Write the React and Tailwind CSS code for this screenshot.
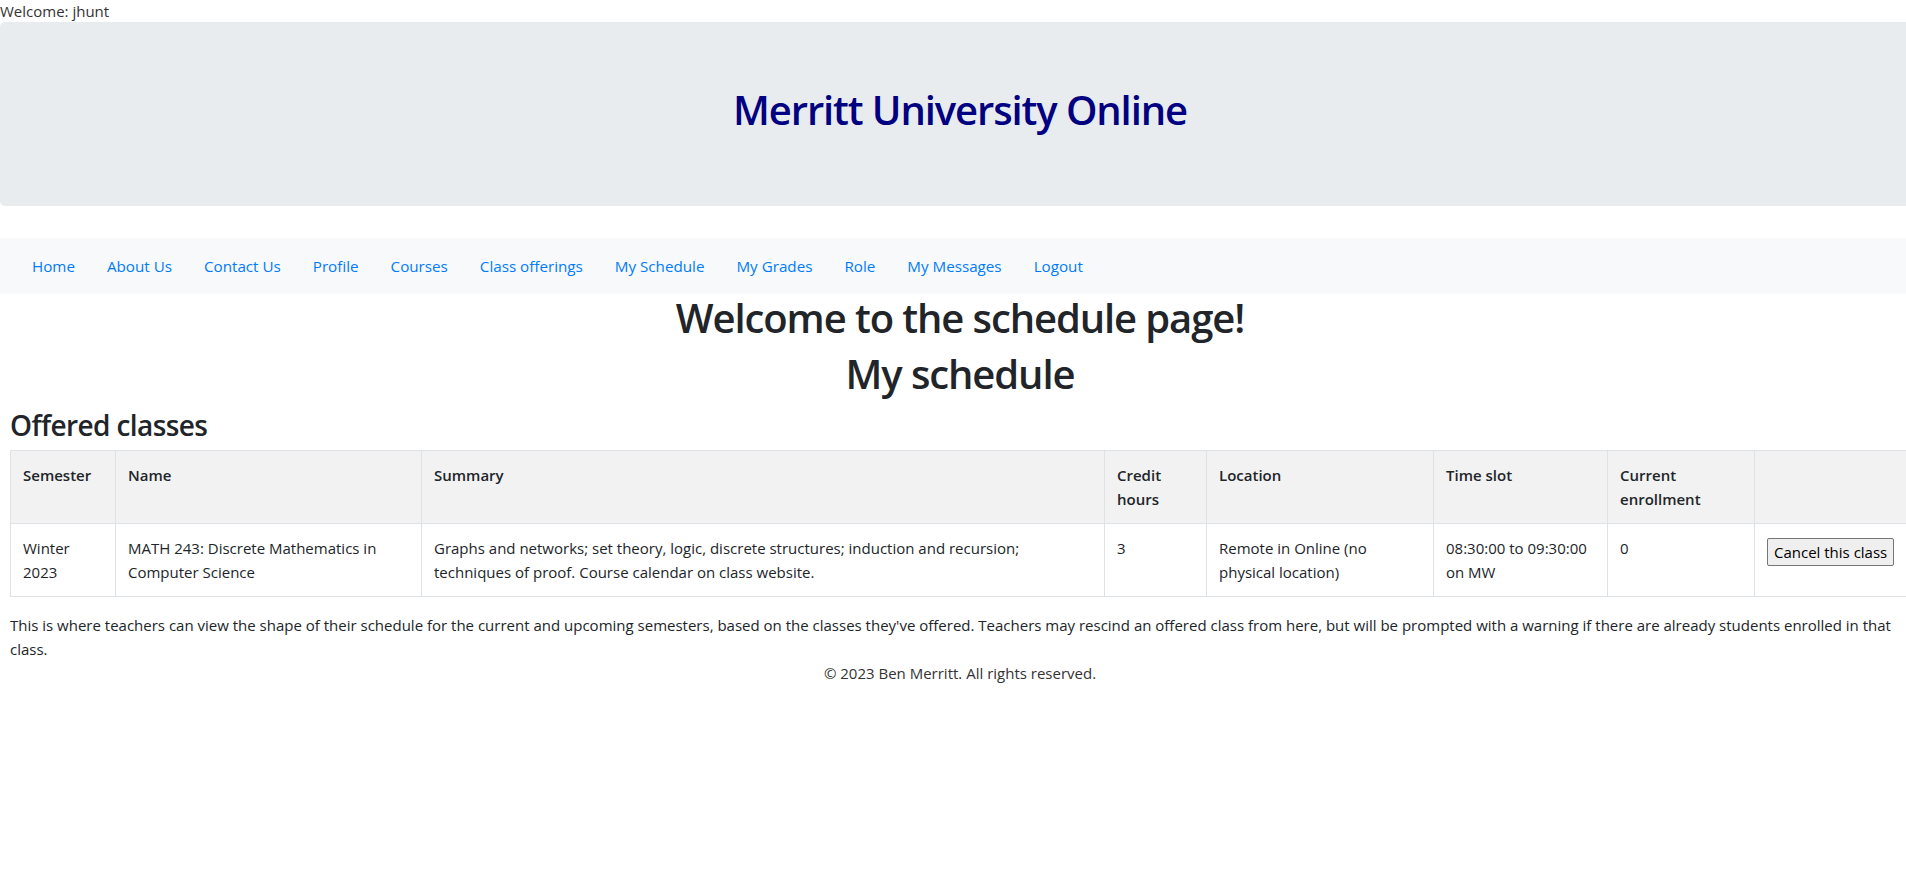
export default function App() {
  const links = ["Home", "About Us", "Contact Us", "Profile", "Courses", "Class offerings", "My Schedule", "My Grades", "Role", "My Messages", "Logout"];
  const ff = { fontFamily: '"Open Sans", "Noto Sans", sans-serif' };
  const th = "border border-[#dee2e6] px-3 py-3 text-left align-top font-semibold";
  const td = "border border-[#dee2e6] px-3 py-3 align-top";
  const h = "text-center text-[40px] leading-[48px] mb-2 font-semibold tracking-[-1.1px]";
  return (
    <div className="w-full overflow-hidden bg-white">
      <div className="w-[1920px] text-[15px] leading-6 text-[#212529]" style={ff}>
        <div className="leading-[22px] text-[15px] text-[#333]">Welcome: jhunt</div>
        <div className="bg-[#e9ecef] rounded-[5px] px-8 py-16 mb-8">
          <h1 className={h + " text-[#000080]"}>Merritt University Online</h1>
        </div>
        <nav className="bg-[#f8f9fa] h-[56px] flex items-center px-4">
          {links.map((l) => (
            <a key={l} className="px-4 py-2 text-[#007bff] text-[15.2px]">{l}</a>
          ))}
        </nav>
        <div className="px-[10px]">
          <h1 className={h}>Welcome to the schedule page!</h1>
          <h1 className={h}>My schedule</h1>
          <h3 className="text-[28px] leading-[34px] mb-2 font-semibold tracking-[-0.6px] pt-[2px]">Offered classes</h3>
          <table className="border-collapse table-fixed w-[1900px] mb-4 text-[15px] leading-6">
            <colgroup>
              <col className="w-[105px]" />
              <col className="w-[306px]" />
              <col className="w-[683px]" />
              <col className="w-[102px]" />
              <col className="w-[227px]" />
              <col className="w-[174px]" />
              <col className="w-[147px]" />
              <col className="w-[156px]" />
            </colgroup>
            <thead>
              <tr className="bg-[#f2f2f2]">
                <th className={th}>Semester</th>
                <th className={th}>Name</th>
                <th className={th}>Summary</th>
                <th className={th}>Credit hours</th>
                <th className={th}>Location</th>
                <th className={th}>Time slot</th>
                <th className={th}>Current enrollment</th>
                <th className={th}></th>
              </tr>
            </thead>
            <tbody>
              <tr>
                <td className={td}>Winter 2023</td>
                <td className={td}>MATH 243: Discrete Mathematics in Computer Science</td>
                <td className={td}>Graphs and networks; set theory, logic, discrete structures; induction and recursion; techniques of proof. Course calendar on class website.</td>
                <td className={td}>3</td>
                <td className={td}>Remote in Online (no physical location)</td>
                <td className={td}>08:30:00 to 09:30:00 on MW</td>
                <td className={td}>0</td>
                <td className={td}>
                  <button className="border border-[#767676] bg-[#efefef] rounded-[2px] px-[6px] py-[1px] mt-[2px] text-[15px] leading-[24px] text-black whitespace-nowrap">Cancel this class</button>
                </td>
              </tr>
            </tbody>
          </table>
          <p className="text-[15px] leading-6 w-[1890px]">This is where teachers can view the shape of their schedule for the current and upcoming semesters, based on the classes they've offered. Teachers may rescind an offered class from here, but will be prompted with a warning if there are already students enrolled in that class.</p>
          <footer className="text-center text-[15px] leading-6 text-[#333]">© 2023 Ben Merritt. All rights reserved.</footer>
        </div>
      </div>
    </div>
  );
}
